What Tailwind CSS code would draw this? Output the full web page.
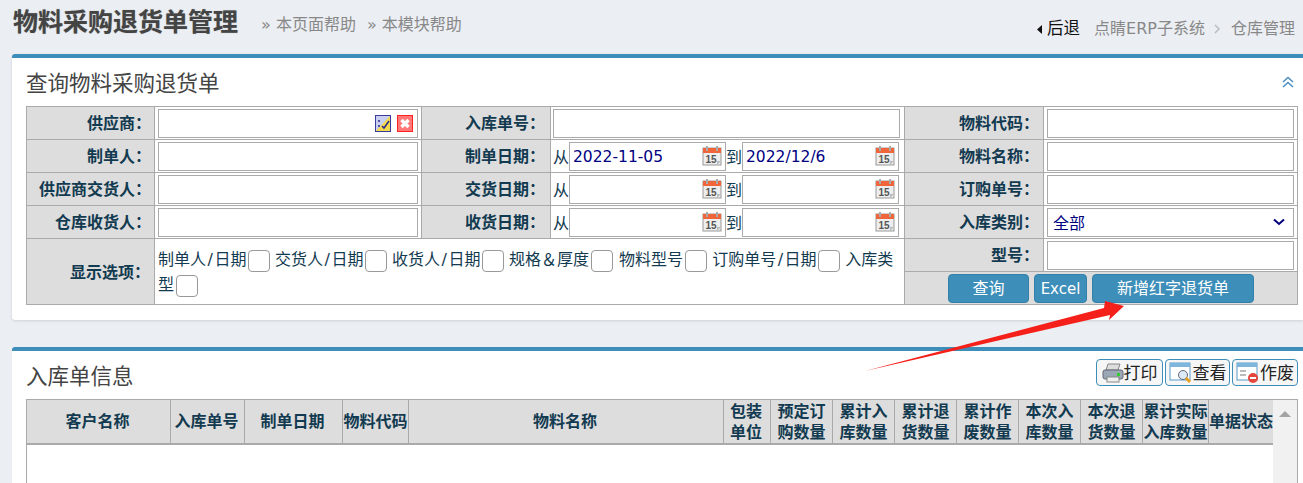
<!DOCTYPE html>
<html lang="zh-CN">
<head>
<meta charset="utf-8">
<title>物料采购退货单管理</title>
<script src="https://cdn.jsdelivr.net/npm/@tailwindcss/browser@4"></script>
</head>
<body class="relative h-[483px] overflow-hidden bg-[#ebeef3] font-['DejaVu_Sans','Noto_Sans_CJK_SC',sans-serif] text-[16px] text-[#123a50]">

<svg class="hidden">
  <symbol id="cal" viewBox="0 0 20 20">
    <rect x="1" y="2" width="18" height="17" fill="#eee" stroke="#999"/>
    <rect x="1" y="2" width="18" height="5" fill="#f0653a"/>
    <rect x="4" y="0" width="2" height="5" fill="#aaa"/>
    <rect x="14" y="0" width="2" height="5" fill="#aaa"/>
    <text x="3.500" y="16.500" font-size="10" font-weight="700" font-family="Liberation Sans" fill="#555">15</text>
    <path d="M15 19l4-4h-4z" fill="#bbb"/>
  </symbol>
</svg>

<!-- page head -->
<div class="flex items-start h-[54px] pl-[13px] pr-[8px]">
  <h1 class="text-[25px] leading-[44px] mt-[1px] font-bold text-[#444] [text-shadow:0_0_1px_#999]">物料采购退货单管理</h1>
  <a class="ml-[23px] mt-[14px] leading-[22px] text-[#888]">» 本页面帮助</a>
  <a class="ml-[11px] mt-[14px] leading-[22px] text-[#888]">» 本模块帮助</a>
  <div class="ml-auto mt-[18px] flex items-center leading-[22px] text-[#888]">
    <svg width="6" height="9" viewBox="0 0 6 9" class="mr-[4px]"><path d="M5 0v9L0 4.500z" fill="#111"/></svg>
    <span class="text-[16.500px] text-[#111]">后退</span>
    <span class="ml-[14px]">点睛ERP子系统</span>
    <svg width="6" height="10" viewBox="0 0 6 10" class="ml-[9px] mr-[11px]"><path d="M1 1l4 4-4 4" fill="none" stroke="#b5bcc4" stroke-width="1.500"/></svg>
    <span>仓库管理</span>
  </div>
</div>

<!-- query panel -->
<section class="ml-[12px] h-[266px] bg-white border-t-4 border-[#3d8eb9] rounded-tl-[3px] rounded-bl-[3px] shadow-[0_1px_3px_rgba(0,0,0,0.12)] pl-[14px] pr-[5px]">
  <div class="flex items-center justify-between h-[48px] pr-[4px]">
    <h2 class="text-[21.500px] text-[#444] font-normal mt-[4px]">查询物料采购退货单</h2>
    <svg width="12" height="12" viewBox="0 0 12 12"><path d="M1 6l5-4.500L11 6M1 11l5-4.500L11 11" fill="none" stroke="#4a8fc4" stroke-width="1.500"/></svg>
  </div>
  <table class="table-fixed border-collapse w-[1272px] border border-[#aaa]">
    <colgroup>
      <col class="w-[128px]"><col class="w-[267px]"><col class="w-[129px]"><col class="w-[354px]"><col class="w-[139px]"><col>
    </colgroup>
    <tbody>
      <tr class="h-[33px]">
        <th class="border border-[#aaa] bg-[#ddd] text-right pr-[3px] pt-[2px] font-bold">供应商：</th>
        <td class="border border-[#aaa] px-[3px]">
          <div class="flex items-center justify-end gap-[6px] h-[29px] border border-[#aaa] pr-[4px]">
            <svg width="16" height="17" viewBox="0 0 16 17"><rect x=".5" y=".5" width="15" height="16" fill="#f3d94e" stroke="#3b3b9c"/><path d="M1 1h14L1 16z" fill="#c9cff0"/><path d="M3 6h2M3 11h2M7 11l2 2 5-7" fill="none" stroke="#2a2a8c" stroke-width="1.500"/></svg>
            <svg width="16" height="17" viewBox="0 0 16 17"><rect x=".5" y=".5" width="15" height="16" fill="#f77" stroke="#f22"/><path d="M4.500 5l7 7M11.500 5l-7 7" stroke="#fff" stroke-width="3.500"/></svg>
          </div>
        </td>
        <th class="border border-[#aaa] bg-[#ddd] text-right pr-[5px] pt-[2px] font-bold">入库单号：</th>
        <td class="border border-[#aaa] px-[2px]"><div class="h-[29px] mr-[2px] border border-[#aaa]"></div></td>
        <th class="border border-[#aaa] bg-[#ddd] text-right pr-[4px] pt-[2px] font-bold">物料代码：</th>
        <td class="border border-[#aaa] px-[3px]"><div class="h-[29px] border border-[#aaa]"></div></td>
      </tr>
      <tr class="h-[33px]">
        <th class="border border-[#aaa] bg-[#ddd] text-right pr-[3px] pt-[2px] font-bold">制单人：</th>
        <td class="border border-[#aaa] px-[3px]"><div class="h-[29px] border border-[#aaa]"></div></td>
        <th class="border border-[#aaa] bg-[#ddd] text-right pr-[5px] pt-[2px] font-bold">制单日期：</th>
        <td class="border border-[#aaa] px-[2px]">
          <div class="flex items-center h-[29px]">
            <span class="w-[16px] mt-[3px]">从</span>
            <div class="flex items-center justify-between w-[157px] h-[29px] border border-[#aaa] pl-[3px] pr-[3px] text-[15.500px] text-[#00007f]"><span class="mt-[3px]">2022-11-05</span><svg width="20" height="20"><use href="#cal"/></svg></div>
            <span class="w-[16px] mt-[3px]">到</span>
            <div class="flex items-center justify-between w-[157px] h-[29px] border border-[#aaa] pl-[3px] pr-[3px] text-[15.500px] text-[#00007f]"><span class="mt-[3px]">2022/12/6</span><svg width="20" height="20"><use href="#cal"/></svg></div>
          </div>
        </td>
        <th class="border border-[#aaa] bg-[#ddd] text-right pr-[4px] pt-[2px] font-bold">物料名称：</th>
        <td class="border border-[#aaa] px-[3px]"><div class="h-[29px] border border-[#aaa]"></div></td>
      </tr>
      <tr class="h-[33px]">
        <th class="border border-[#aaa] bg-[#ddd] text-right pr-[3px] pt-[2px] font-bold">供应商交货人：</th>
        <td class="border border-[#aaa] px-[3px]"><div class="h-[29px] border border-[#aaa]"></div></td>
        <th class="border border-[#aaa] bg-[#ddd] text-right pr-[5px] pt-[2px] font-bold">交货日期：</th>
        <td class="border border-[#aaa] px-[2px]">
          <div class="flex items-center h-[29px]">
            <span class="w-[16px] mt-[3px]">从</span>
            <div class="flex items-center justify-end w-[157px] h-[29px] border border-[#aaa] pr-[3px]"><svg width="20" height="20"><use href="#cal"/></svg></div>
            <span class="w-[16px] mt-[3px]">到</span>
            <div class="flex items-center justify-end w-[157px] h-[29px] border border-[#aaa] pr-[3px]"><svg width="20" height="20"><use href="#cal"/></svg></div>
          </div>
        </td>
        <th class="border border-[#aaa] bg-[#ddd] text-right pr-[4px] pt-[2px] font-bold">订购单号：</th>
        <td class="border border-[#aaa] px-[3px]"><div class="h-[29px] border border-[#aaa]"></div></td>
      </tr>
      <tr class="h-[33px]">
        <th class="border border-[#aaa] bg-[#ddd] text-right pr-[3px] pt-[2px] font-bold">仓库收货人：</th>
        <td class="border border-[#aaa] px-[3px]"><div class="h-[29px] border border-[#aaa]"></div></td>
        <th class="border border-[#aaa] bg-[#ddd] text-right pr-[5px] pt-[2px] font-bold">收货日期：</th>
        <td class="border border-[#aaa] px-[2px]">
          <div class="flex items-center h-[29px]">
            <span class="w-[16px] mt-[3px]">从</span>
            <div class="flex items-center justify-end w-[157px] h-[29px] border border-[#aaa] pr-[3px]"><svg width="20" height="20"><use href="#cal"/></svg></div>
            <span class="w-[16px] mt-[3px]">到</span>
            <div class="flex items-center justify-end w-[157px] h-[29px] border border-[#aaa] pr-[3px]"><svg width="20" height="20"><use href="#cal"/></svg></div>
          </div>
        </td>
        <th class="border border-[#aaa] bg-[#ddd] text-right pr-[4px] pt-[2px] font-bold">入库类别：</th>
        <td class="border border-[#aaa] px-[3px]">
          <div class="flex items-center justify-between h-[29px] border border-[#aaa] pl-[5px] pr-[8px] text-[#00007f]"><span class="mt-[3px]">全部</span><svg width="12" height="8" viewBox="0 0 12 8"><path d="M1 1.500l5 4.500 5-4.500" fill="none" stroke="#00007f" stroke-width="2"/></svg></div>
        </td>
      </tr>
      <tr class="h-[33px]">
        <th rowspan="2" class="border border-[#aaa] bg-[#ddd] text-right pr-[4px] pt-[2px] font-bold">显示选项：</th>
        <td rowspan="2" colspan="3" class="border border-[#aaa] pl-[3px] pr-[6px] align-top pt-[8px] leading-[25px]">
          制单人<span class="px-[1.500px]">/</span>日期<input type="checkbox" class="appearance-none align-middle ml-[1.500px] w-[22px] h-[22px] border border-[#999] rounded-[4px]"> 交货人<span class="px-[1.500px]">/</span>日期<input type="checkbox" class="appearance-none align-middle ml-[1.500px] w-[22px] h-[22px] border border-[#999] rounded-[4px]"> 收货人<span class="px-[1.500px]">/</span>日期<input type="checkbox" class="appearance-none align-middle ml-[1.500px] w-[22px] h-[22px] border border-[#999] rounded-[4px]"> 规格＆厚度<input type="checkbox" class="appearance-none align-middle ml-[2px] mr-[1px] w-[22px] h-[22px] border border-[#999] rounded-[4px]"> 物料型号<input type="checkbox" class="appearance-none align-middle ml-[2px] w-[22px] h-[22px] border border-[#999] rounded-[4px]"> 订购单号<span class="px-[1.500px]">/</span>日期<input type="checkbox" class="appearance-none align-middle ml-[1.500px] w-[22px] h-[22px] border border-[#999] rounded-[4px]"> 入库类<br>型<input type="checkbox" class="appearance-none align-middle ml-[1.500px] w-[22px] h-[22px] border border-[#999] rounded-[4px]">
        </td>
        <th class="border border-[#aaa] bg-[#ddd] text-right pr-[4px] pt-[2px] font-bold">型号：</th>
        <td class="border border-[#aaa] px-[3px]"><div class="h-[29px] border border-[#aaa]"></div></td>
      </tr>
      <tr class="h-[33px]">
        <td colspan="2" class="border border-[#aaa] bg-[#ddd]">
          <div class="flex justify-center gap-[5px] text-white">
            <button class="w-[81px] h-[29px] pt-[2px] bg-[#3d8eb9] border border-[#3580a8] rounded-[4px]">查询</button>
            <button class="w-[53px] h-[29px] pt-[2px] bg-[#3d8eb9] border border-[#3580a8] rounded-[4px] text-[15px]">Excel</button>
            <button class="w-[162px] h-[29px] pt-[2px] bg-[#3d8eb9] border border-[#3580a8] rounded-[4px]">新增红字退货单</button>
          </div>
        </td>
      </tr>
    </tbody>
  </table>
</section>

<!-- result panel -->
<section class="ml-[12px] mt-[27px] h-[136px] overflow-hidden bg-white border-t-4 border-[#3d8eb9] rounded-tl-[3px] pl-[14px] pr-[5px]">
  <div class="flex items-center justify-between h-[48px]">
    <h2 class="text-[21.500px] text-[#444] font-normal mt-[5px]">入库单信息</h2>
    <div class="flex gap-[2px] mt-[-6px] text-[17px] text-[#222]">
      <button class="flex items-center justify-center gap-0 w-[67px] h-[27px] pt-[1px] bg-[#f6f6f6] border border-[#3d8eb9] rounded-[4px]">
        <svg width="22" height="20" viewBox="0 0 22 20"><path d="M6 1h12l-2 6H4z" fill="#ddd" stroke="#888"/><rect x="1" y="7" width="20" height="9" rx="2" fill="#9aa7b5" stroke="#667"/><rect x="5" y="14" width="12" height="5" fill="#eee" stroke="#888"/><rect x="15" y="10" width="3" height="3" fill="#3c3"/></svg><span class="mt-[2px]">打印</span></button>
      <button class="flex items-center justify-center gap-0 w-[65px] h-[27px] pt-[1px] bg-[#f6f6f6] border border-[#3d8eb9] rounded-[4px]">
        <svg width="24" height="22" viewBox="0 0 24 22"><rect x="1" y="1" width="20" height="17" fill="#fff" stroke="#5a9ac8"/><rect x="1" y="1" width="20" height="4" fill="#7db5dd"/><circle cx="14" cy="13" r="4.500" fill="#dcebf5" stroke="#667"/><path d="M17 16l4 4" stroke="#e8a020" stroke-width="3"/></svg><span class="mt-[2px]">查看</span></button>
      <button class="flex items-center justify-center gap-0 w-[66px] h-[27px] pt-[1px] bg-[#f6f6f6] border border-[#3d8eb9] rounded-[4px]">
        <svg width="24" height="22" viewBox="0 0 24 22"><rect x="1" y="1" width="20" height="17" fill="#fff" stroke="#5a9ac8"/><rect x="1" y="1" width="20" height="4" fill="#7db5dd"/><path d="M4 9h6M4 13h6" stroke="#bbb" stroke-width="2"/><circle cx="17" cy="16" r="5" fill="#e2463c"/><path d="M14 16h6" stroke="#fff" stroke-width="2"/></svg><span class="mt-[2px]">作废</span></button>
    </div>
  </div>
  <div class="flex w-[1272px] h-[100px] border border-[#aaa]">
    <div class="w-[1246px] shrink-0">
      <div class="grid grid-cols-[144px_74px_98px_66px_315px_47px_62px_62px_62px_62px_62px_62px_66px_64px] h-[45px] bg-[#ddd] border-b-2 border-[#aaa] font-bold leading-[21px] text-center">
        <div class="flex items-center justify-center pr-[2px] border-r border-[#aaa]">客户名称</div>
        <div class="flex items-center justify-center pr-[2px] border-r border-[#aaa]">入库单号</div>
        <div class="flex items-center justify-center pr-[2px] border-r border-[#aaa]">制单日期</div>
        <div class="flex items-center justify-center border-r border-[#aaa]">物料代码</div>
        <div class="flex items-center justify-center pr-[2px] border-r border-[#aaa]">物料名称</div>
        <div class="flex items-center justify-center pr-[2px] border-r border-[#aaa]">包装<br>单位</div>
        <div class="flex items-center justify-center border-r border-[#aaa]">预定订<br>购数量</div>
        <div class="flex items-center justify-center border-r border-[#aaa]">累计入<br>库数量</div>
        <div class="flex items-center justify-center border-r border-[#aaa]">累计退<br>货数量</div>
        <div class="flex items-center justify-center border-r border-[#aaa]">累计作<br>废数量</div>
        <div class="flex items-center justify-center border-r border-[#aaa]">本次入<br>库数量</div>
        <div class="flex items-center justify-center border-r border-[#aaa]">本次退<br>货数量</div>
        <div class="flex items-center justify-center border-r border-[#aaa]">累计实际<br>入库数量</div>
        <div class="flex items-center justify-center">单据状态</div>
      </div>
    </div>
    <div class="flex-1 bg-[#f1f1f1] flex justify-center pt-[11px]">
      <svg width="12" height="6" viewBox="0 0 12 6"><path d="M6 0l6 6H0z" fill="#a3a3a3"/></svg>
    </div>
  </div>
</section>

<!-- red annotation arrow -->
<svg class="absolute left-[860px] top-[295px]" width="270" height="80" viewBox="860 295 270 80">
  <path d="M865 371L1104 308L1105 301L1124 306L1109 320L1110 315z" fill="#f5201a"/>
</svg>

</body>
</html>
